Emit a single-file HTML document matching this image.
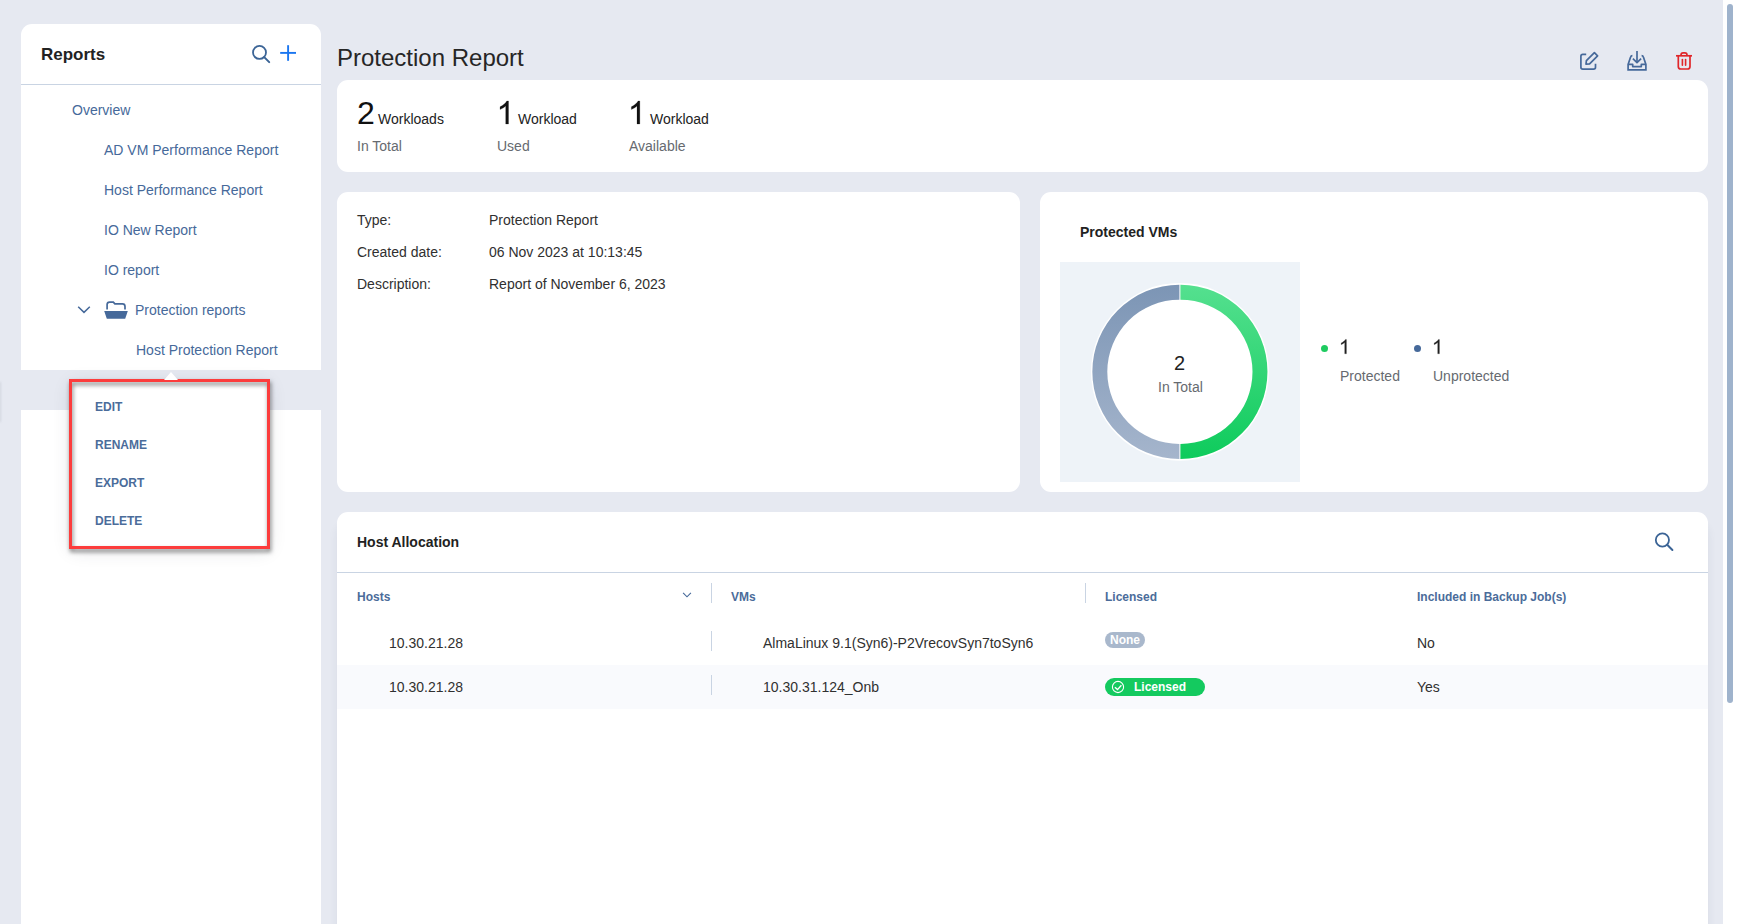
<!DOCTYPE html>
<html><head><meta charset="utf-8">
<style>
html,body{margin:0;padding:0;}
body{width:1737px;height:924px;overflow:hidden;background:#e6e9f1;position:relative;font-family:"Liberation Sans",sans-serif;}
.a{position:absolute;}
.t{position:absolute;white-space:nowrap;line-height:1;font-size:14px;}
.card{position:absolute;background:#fff;border-radius:11px;}
.lnk{color:#46699a;}
.dk{color:#303030;}
.gr{color:#666a70;}
.hd{font-weight:bold;font-size:12px;color:#4b6c9a;}
.mi{font-weight:bold;font-size:12px;color:#4b6c9a;}
</style></head><body>

<!-- Sidebar -->
<div class="card" style="left:21px;top:24px;width:300px;height:346px;border-radius:11px 11px 0 0;"></div>
<div class="a" style="left:21px;top:410px;width:300px;height:514px;background:#fff;"></div>
<div class="t dk" style="left:41px;top:46px;font-size:17px;font-weight:bold;color:#222;">Reports</div>
<svg class="a" style="left:240px;top:36px" width="70" height="36" viewBox="240 36 70 36">
  <circle cx="259.5" cy="52.4" r="6.5" fill="none" stroke="#3b6496" stroke-width="1.8"/>
  <line x1="264.2" y1="57.1" x2="269.2" y2="62.1" stroke="#3b6496" stroke-width="2" stroke-linecap="round"/>
  <line x1="280.2" y1="52.9" x2="296" y2="52.9" stroke="#1a76f0" stroke-width="1.9"/>
  <line x1="288.1" y1="45.2" x2="288.1" y2="60.8" stroke="#1a76f0" stroke-width="1.9"/>
</svg>
<div class="a" style="left:21px;top:84px;width:300px;height:1px;background:#c9d4e3;"></div>
<div class="t lnk" style="left:72px;top:103px;">Overview</div>
<div class="t lnk" style="left:104px;top:143px;">AD VM Performance Report</div>
<div class="t lnk" style="left:104px;top:183px;">Host Performance Report</div>
<div class="t lnk" style="left:104px;top:223px;">IO New Report</div>
<div class="t lnk" style="left:104px;top:263px;">IO report</div>
<svg class="a" style="left:70px;top:295px" width="65" height="30" viewBox="70 295 65 30">
  <polyline points="78.2,306.8 84,312.4 89.8,306.8" fill="none" stroke="#46699a" stroke-width="1.5"/>
  <path d="M107.1,309.6 V304.6 Q107.1,302.1 109.6,302.1 H113.3 L114.9,303.9 H122.5 Q125,303.9 125,306.4 V309.6" fill="none" stroke="#46699a" stroke-width="1.7"/>
  <path d="M104.2,311 H127.8 L125.2,318.8 H106.8 Z" fill="#46699a"/>
</svg>
<div class="t lnk" style="left:135px;top:303px;">Protection reports</div>
<div class="t lnk" style="left:136px;top:343px;">Host Protection Report</div>

<!-- popup -->
<div class="a" style="left:-3px;top:382px;width:4px;height:40px;background:rgba(60,70,90,0.10);filter:blur(1px);"></div>
<div class="a" style="left:72px;top:382px;width:195px;height:164px;background:#fff;box-shadow:0 3px 18px rgba(40,50,70,0.16);"></div>
<div class="a" style="left:69px;top:379px;width:195px;height:164px;border:3px solid #fc3c3c;filter:drop-shadow(1px 3px 2px rgba(0,0,0,0.5));"></div>
<div class="a" style="left:164px;top:372px;width:0;height:0;border-left:7px solid transparent;border-right:7px solid transparent;border-bottom:8px solid #fff;"></div>
<div class="t mi" style="left:95px;top:401px;">EDIT</div>
<div class="t mi" style="left:95px;top:439px;">RENAME</div>
<div class="t mi" style="left:95px;top:477px;">EXPORT</div>
<div class="t mi" style="left:95px;top:515px;">DELETE</div>

<!-- Title -->
<div class="t" style="left:337px;top:46px;font-size:24px;color:#262626;">Protection Report</div>
<svg class="a" style="left:1570px;top:44px" width="130" height="34" viewBox="1570 44 130 34">
  <g fill="none" stroke="#46699a" stroke-width="1.7" stroke-linejoin="round">
    <path d="M1586.2,54.4 H1582.8 Q1580.9,54.4 1580.9,56.3 V67.2 Q1580.9,69.1 1582.8,69.1 H1593.6 Q1595.5,69.1 1595.5,67.2 V63.8"/>
    <path d="M1586,64.2 L1586.4,60.6 L1594.4,52.6 L1597.6,55.8 L1589.6,63.8 Z"/>
  </g>
  <g fill="none" stroke="#46699a" stroke-width="1.7" stroke-linejoin="round">
    <line x1="1637" y1="51" x2="1637" y2="62.5"/>
    <polyline points="1632.9,58.7 1637,62.6 1641.1,58.7"/>
    <path d="M1632.4,55.6 Q1631,55.6 1630.6,57 L1628.1,64.4 V69.8 H1645.9 V64.4 L1643.4,57 Q1643,55.6 1641.6,55.6" stroke-linejoin="miter"/>
    <path d="M1628.1,64.4 H1632.7 V66.6 H1641.3 V64.4 H1645.9"/>
  </g>
  <g fill="none" stroke="#e0262a" stroke-width="1.7" stroke-linejoin="round">
    <line x1="1676" y1="55.8" x2="1692" y2="55.8"/>
    <path d="M1681,55.6 V54.9 Q1681,52.8 1683.1,52.8 H1684.9 Q1687,52.8 1687,54.9 V55.6"/>
    <path d="M1678.3,55.8 V66.5 Q1678.3,69 1680.8,69 H1687.5 Q1690,69 1690,66.5 V55.8"/>
    <line x1="1682.4" y1="59.6" x2="1682.4" y2="65.3" stroke-linecap="round" stroke-width="1.6"/>
    <line x1="1685.6" y1="59.6" x2="1685.6" y2="65.3" stroke-linecap="round" stroke-width="1.6"/>
  </g>
</svg>

<!-- Stats card -->
<div class="card" style="left:337px;top:80px;width:1371px;height:92px;"></div>
<div class="t" style="left:357px;top:97px;font-size:32px;color:#111;">2</div>
<div class="t" style="left:378px;top:112px;color:#222;">Workloads</div>
<div class="t gr" style="left:357px;top:139px;">In Total</div>
<svg class="a" style="left:0;top:0;overflow:visible" width="1" height="1"><path d="M763,0 L583,0 L583,1147 Q518,1085 412,1023 Q306,961 221,929 L221,1103 Q374,1175 488,1277 Q602,1379 650,1475 L763,1475 Z" transform="translate(496.6,124) scale(0.015625,-0.015625)" fill="#111" stroke="#111" stroke-width="13"/></svg>
<div class="t" style="left:518px;top:112px;color:#222;">Workload</div>
<div class="t gr" style="left:497px;top:139px;">Used</div>
<svg class="a" style="left:0;top:0;overflow:visible" width="1" height="1"><path d="M763,0 L583,0 L583,1147 Q518,1085 412,1023 Q306,961 221,929 L221,1103 Q374,1175 488,1277 Q602,1379 650,1475 L763,1475 Z" transform="translate(627.9,124) scale(0.015625,-0.015625)" fill="#111" stroke="#111" stroke-width="13"/></svg>
<div class="t" style="left:650px;top:112px;color:#222;">Workload</div>
<div class="t gr" style="left:629px;top:139px;">Available</div>

<!-- Info card -->
<div class="card" style="left:337px;top:192px;width:683px;height:300px;"></div>
<div class="t dk" style="left:357px;top:213px;">Type:</div>
<div class="t dk" style="left:489px;top:213px;">Protection Report</div>
<div class="t dk" style="left:357px;top:245px;">Created date:</div>
<div class="t dk" style="left:489px;top:245px;">06 Nov 2023 at 10:13:45</div>
<div class="t dk" style="left:357px;top:277px;">Description:</div>
<div class="t dk" style="left:489px;top:277px;">Report of November 6, 2023</div>

<!-- Chart card -->
<div class="card" style="left:1040px;top:192px;width:668px;height:300px;"></div>
<div class="t" style="left:1080px;top:225px;font-weight:bold;color:#222;">Protected VMs</div>
<div class="a" style="left:1060px;top:262px;width:240px;height:220px;background:#eef3f8;"></div>
<svg class="a" style="left:1060px;top:262px" width="240" height="220" viewBox="1060 262 240 220">
  <defs>
    <linearGradient id="gg" x1="0" y1="0" x2="0" y2="1">
      <stop offset="0" stop-color="#55e08f"/><stop offset="1" stop-color="#0ecb5c"/>
    </linearGradient>
    <linearGradient id="bg" x1="0" y1="0" x2="0" y2="1">
      <stop offset="0" stop-color="#7c95b5"/><stop offset="1" stop-color="#a5b5cc"/>
    </linearGradient>
  </defs>
  <circle cx="1179.9" cy="371.8" r="88.89999999999999" fill="#fff"/>
  <path d="M1180.4,284.70000000000005 A87.1,87.1 0 0 1 1180.4,458.9 V443.9 A72.1,72.1 0 0 0 1180.4,299.70000000000005 Z" fill="url(#gg)"/>
  <path d="M1179.4,284.70000000000005 A87.1,87.1 0 0 0 1179.4,458.9 V443.9 A72.1,72.1 0 0 1 1179.4,299.70000000000005 Z" fill="url(#bg)"/>
</svg>
<div class="t" style="left:1174px;top:353px;font-size:20px;color:#222;">2</div>
<div class="t gr" style="left:1158px;top:380px;">In Total</div>
<div class="a" style="left:1321px;top:345px;width:7px;height:7px;border-radius:50%;background:#1ecb60;"></div>
<svg class="a" style="left:0;top:0;overflow:visible" width="1" height="1"><path d="M763,0 L583,0 L583,1147 Q518,1085 412,1023 Q306,961 221,929 L221,1103 Q374,1175 488,1277 Q602,1379 650,1475 L763,1475 Z" transform="translate(1339.0,353.8) scale(0.009765625,-0.009765625)" fill="#222" stroke="#222" stroke-width="20"/></svg>
<div class="t gr" style="left:1340px;top:369px;">Protected</div>
<div class="a" style="left:1414px;top:345px;width:7px;height:7px;border-radius:50%;background:#46699a;"></div>
<svg class="a" style="left:0;top:0;overflow:visible" width="1" height="1"><path d="M763,0 L583,0 L583,1147 Q518,1085 412,1023 Q306,961 221,929 L221,1103 Q374,1175 488,1277 Q602,1379 650,1475 L763,1475 Z" transform="translate(1432.0,353.8) scale(0.009765625,-0.009765625)" fill="#222" stroke="#222" stroke-width="20"/></svg>
<div class="t gr" style="left:1433px;top:369px;">Unprotected</div>

<!-- Host allocation card -->
<div class="card" style="left:337px;top:512px;width:1371px;height:440px;box-shadow:0 12px 10px rgba(40,50,90,0.07);"></div>
<div class="t" style="left:357px;top:535px;font-weight:bold;color:#222;">Host Allocation</div>
<svg class="a" style="left:1650px;top:528px" width="28" height="28" viewBox="1650 528 28 28">
  <circle cx="1662.4" cy="540" r="6.6" fill="none" stroke="#3b6496" stroke-width="1.8"/>
  <line x1="1667.2" y1="544.8" x2="1672.4" y2="550" stroke="#3b6496" stroke-width="2" stroke-linecap="round"/>
</svg>
<div class="a" style="left:337px;top:572px;width:1371px;height:1px;background:#c9d4e3;"></div>
<div class="t hd" style="left:357px;top:591px;">Hosts</div>
<svg class="a" style="left:676px;top:586px" width="20" height="16" viewBox="676 586 20 16">
  <polyline points="683.1,592.9 687,596.8 690.9,592.9" fill="none" stroke="#46699a" stroke-width="1.15"/>
</svg>
<div class="a" style="left:711px;top:583px;width:1px;height:20px;background:#c9d4e3;"></div>
<div class="t hd" style="left:731px;top:591px;">VMs</div>
<div class="a" style="left:1085px;top:583px;width:1px;height:20px;background:#c9d4e3;"></div>
<div class="t hd" style="left:1105px;top:591px;">Licensed</div>
<div class="t hd" style="left:1417px;top:591px;">Included in Backup Job(s)</div>

<div class="t dk" style="left:389px;top:636px;">10.30.21.28</div>
<div class="a" style="left:711px;top:631px;width:1px;height:20px;background:#c9d4e3;"></div>
<div class="t dk" style="left:763px;top:636px;">AlmaLinux 9.1(Syn6)-P2VrecovSyn7toSyn6</div>
<div class="a" style="left:1105px;top:632px;width:40px;height:16px;border-radius:8px;background:#a9b8cc;"></div>
<div class="t" style="left:1110px;top:634px;font-size:12px;font-weight:bold;color:#fff;">None</div>
<div class="t dk" style="left:1417px;top:636px;">No</div>

<div class="a" style="left:337px;top:665px;width:1371px;height:44px;background:#f9fafd;"></div>
<div class="t dk" style="left:389px;top:680px;">10.30.21.28</div>
<div class="a" style="left:711px;top:675px;width:1px;height:20px;background:#c9d4e3;"></div>
<div class="t dk" style="left:763px;top:680px;">10.30.31.124_Onb</div>
<div class="a" style="left:1105px;top:678px;width:100px;height:18px;border-radius:9px;background:#14ca5f;"></div>
<svg class="a" style="left:1104px;top:678px" width="30" height="18" viewBox="1104 678 30 18">
  <circle cx="1118" cy="687" r="5.6" fill="none" stroke="#fff" stroke-width="1.1"/>
  <polyline points="1114.9,687.3 1117.5,689.6 1121.4,685.2" fill="none" stroke="#fff" stroke-width="1.4"/>
</svg>
<div class="t" style="left:1134px;top:681px;font-size:12px;font-weight:bold;color:#fff;">Licensed</div>
<div class="t dk" style="left:1417px;top:680px;">Yes</div>

<!-- scrollbar -->
<div class="a" style="left:1723px;top:0;width:14px;height:924px;background:#fff;"></div>
<div class="a" style="left:1727px;top:4px;width:6px;height:699px;border-radius:3px;background:#9fb3cc;"></div>

</body></html>
